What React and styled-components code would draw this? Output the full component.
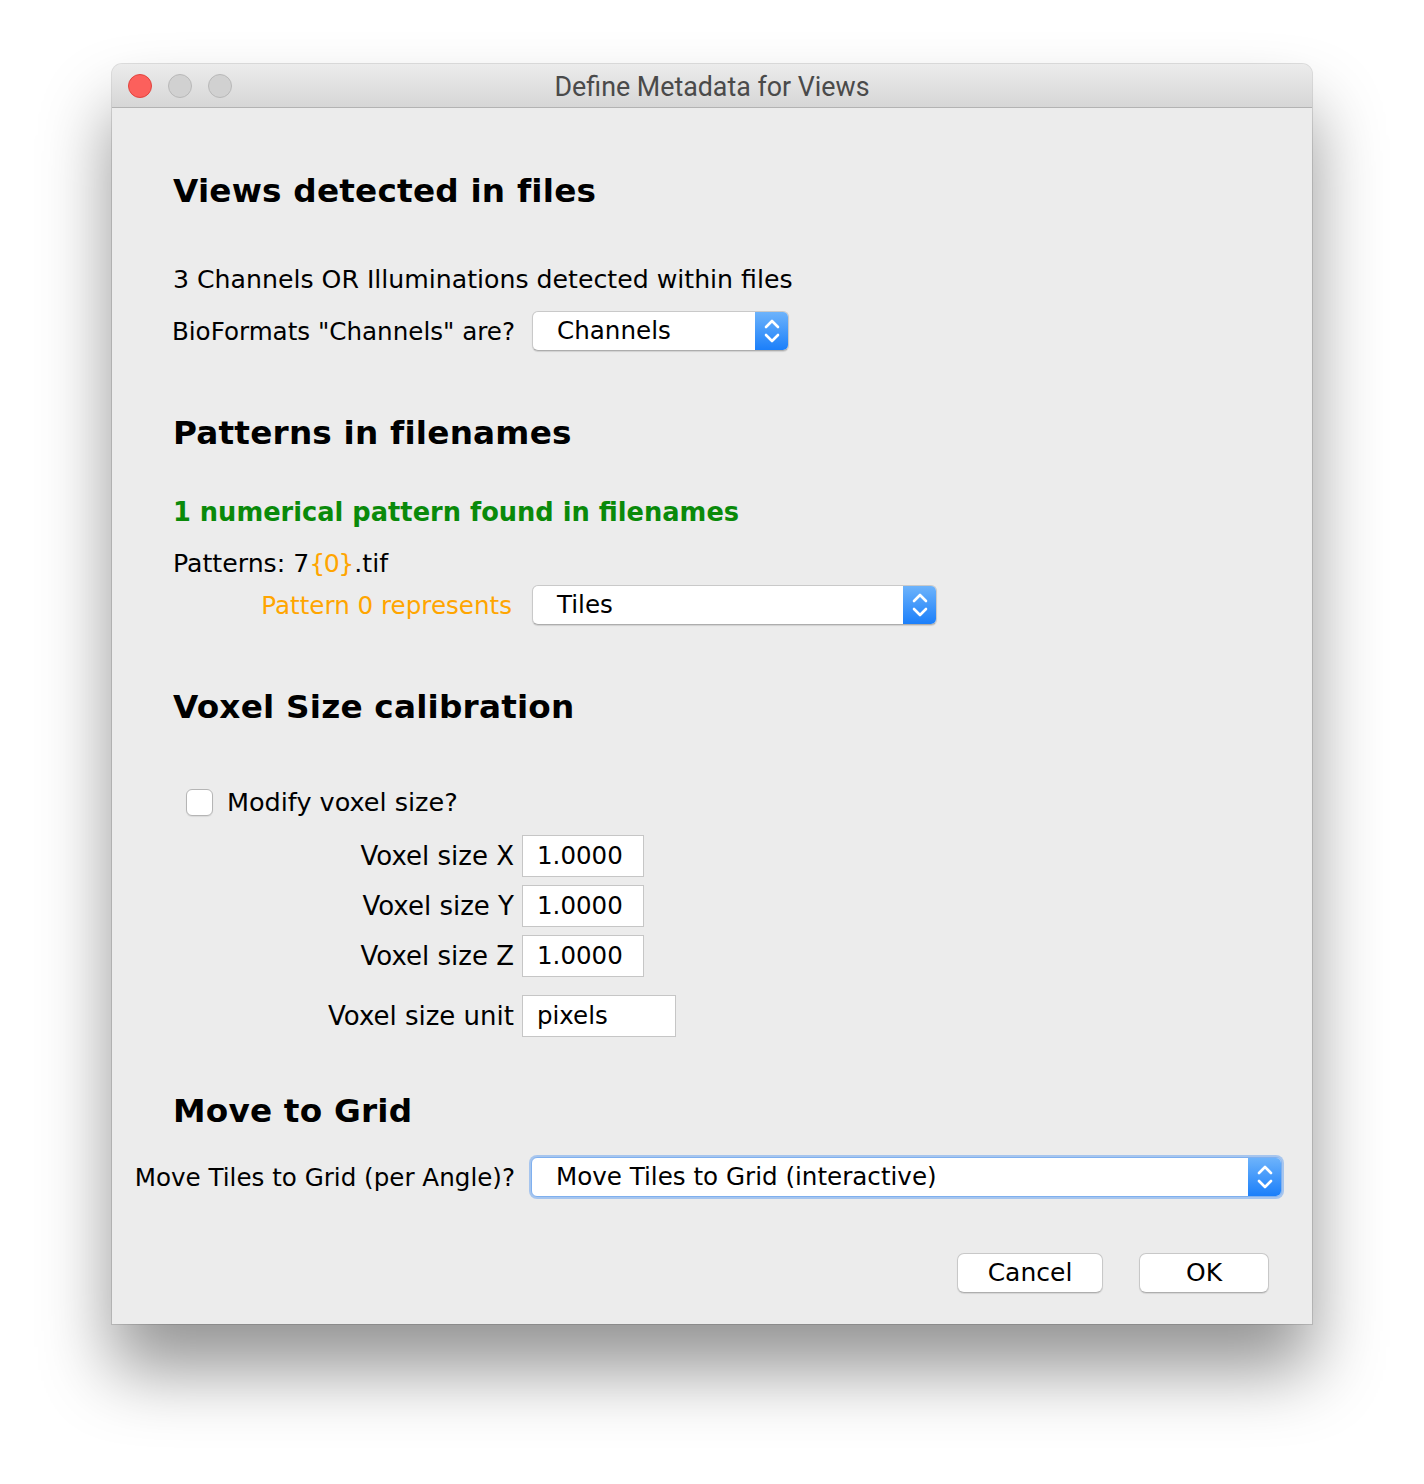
import React from "react";
import styled, { createGlobalStyle } from "styled-components";

const Global = createGlobalStyle`
  html, body { margin: 0; padding: 0; background: #ffffff; }
  body { font-family: "DejaVu Sans", sans-serif; }
  * { box-sizing: border-box; }
`;

const Page = styled.div`
  width: 1424px;
  height: 1484px;
  padding: 64px 0 0 112px;
`;

const Window = styled.div`
  width: 1200px;
  height: 1260px;
  border-radius: 10px 10px 0 0;
  background: #ececec;
  box-shadow: 0 46px 70px rgba(0, 0, 0, 0.42), 0 0 0 1px rgba(0, 0, 0, 0.12);
  display: flex;
  flex-direction: column;
  overflow: hidden;
`;

const TitleBar = styled.div`
  height: 44px;
  flex: none;
  background: linear-gradient(#ececec, #d6d6d6);
  border-bottom: 1px solid #b3b3b3;
  position: relative;
  display: flex;
  align-items: center;
  justify-content: center;
`;

const Lights = styled.div`
  position: absolute;
  left: 16px;
  top: 10px;
  display: flex;
  gap: 16px;
`;

const Light = styled.span`
  width: 24px;
  height: 24px;
  border-radius: 50%;
  background: ${(p) => (p.$red ? "#fc605c" : "#d1d1d1")};
  border: 1px solid ${(p) => (p.$red ? "#e0443e" : "#b8b8b8")};
`;

const Title = styled.div`
  font-family: Roboto, "Liberation Sans", sans-serif;
  font-size: 26.8px;
  color: #4a4a4a;
  padding-top: 2px;
`;

const Body = styled.div`
  flex: 1;
  display: flex;
  flex-direction: column;
  padding-top: 61px;
`;

const Heading = styled.h2`
  margin: ${(p) => p.$mt || 0}px 0 0 61px;
  height: 44px;
  line-height: 44px;
  font-size: 32.7px;
  font-weight: bold;
  color: #000;
  letter-spacing: 0.2px;
`;

const Line = styled.div`
  margin: ${(p) => p.$mt || 0}px 0 0 61px;
  height: 40px;
  line-height: 40px;
  font-size: ${(p) => (p.$bold ? 25.7 : 25.2)}px;
  color: ${(p) => p.$color || "#000"};
  font-weight: ${(p) => (p.$bold ? "bold" : "normal")};
`;

const Orange = styled.span`
  color: #ffa500;
  letter-spacing: -1.5px;
  margin-right: 1.5px;
`;

const Row = styled.div`
  margin-top: ${(p) => p.$mt || 0}px;
  display: flex;
  align-items: center;
  height: ${(p) => p.$h || 40}px;
`;

const Label = styled.div`
  width: ${(p) => p.$w || 403}px;
  flex: none;
  text-align: right;
  font-size: ${(p) => p.$fs || 24.6}px;
  color: ${(p) => p.$color || "#000"};
  white-space: nowrap;
`;

const Select = styled.div`
  margin-left: ${(p) => p.$ml || 17}px;
  width: ${(p) => p.$w}px;
  height: 40px;
  display: flex;
  background: #fff;
  border-radius: 6px;
  border: 1px solid ${(p) => (p.$focus ? "#7fb0ef" : "#c9c9c9")};
  border-bottom-color: ${(p) => (p.$focus ? "#7fb0ef" : "#adadad")};
  box-shadow: ${(p) =>
    p.$focus
      ? "0 0 0 2px rgba(110, 165, 240, 0.55)"
      : "0 1px 1px rgba(0,0,0,0.12)"};
  overflow: hidden;
`;

const SelectText = styled.div`
  flex: 1;
  padding-left: 24px;
  font-size: 24.6px;
  line-height: 38px;
  color: #000;
  white-space: nowrap;
`;

const Stepper = styled.div`
  width: 33px;
  flex: none;
  background: linear-gradient(#6db3fb, #1b7ffa);
  display: flex;
  align-items: center;
  justify-content: center;
`;

const Field = styled.div`
  margin-left: 8px;
  width: ${(p) => p.$w}px;
  height: 42px;
  background: #fff;
  border: 1px solid #c6c6c6;
  padding-left: 14px;
  font-size: 24.5px;
  line-height: 40px;
  color: #000;
`;

const CheckRow = styled.div`
  margin: 53px 0 0 74px;
  height: 40px;
  display: flex;
  align-items: center;
  gap: 14px;
  font-size: 25.5px;
  color: #000;
`;

const Box = styled.span`
  width: 27px;
  height: 27px;
  border-radius: 6px;
  background: #fff;
  border: 1px solid #b5b5b5;
  box-shadow: 0 1px 1px rgba(0,0,0,0.08);
`;

const Buttons = styled.div`
  margin-top: 56px;
  padding-right: 43px;
  display: flex;
  justify-content: flex-end;
  gap: 36px;
`;

const Button = styled.div`
  width: ${(p) => p.$w}px;
  height: 40px;
  background: #fff;
  border: 1px solid #c8c8c8;
  border-bottom-color: #aeaeae;
  border-radius: 7px;
  box-shadow: 0 1px 1px rgba(0,0,0,0.1);
  text-align: center;
  line-height: 38px;
  font-size: 25px;
  color: #000;
`;

const Chevrons = () => (
  <svg width="20" height="28" viewBox="0 0 20 28" fill="none">
    <path d="M4 10 L10 4 L16 10" stroke="#fff" strokeWidth="2.6" strokeLinecap="round" strokeLinejoin="round" />
    <path d="M4 18 L10 24 L16 18" stroke="#fff" strokeWidth="2.6" strokeLinecap="round" strokeLinejoin="round" />
  </svg>
);

const Dropdown = ({ w, value, focus, ml }) => (
  <Select $w={w} $focus={focus} $ml={ml}>
    <SelectText>{value}</SelectText>
    <Stepper>
      <Chevrons />
    </Stepper>
  </Select>
);

export default function App() {
  return (
    <Page>
      <Global />
      <Window>
        <TitleBar>
          <Lights>
            <Light $red />
            <Light />
            <Light />
          </Lights>
          <Title>Define Metadata for Views</Title>
        </TitleBar>
        <Body>
          <Heading>Views detected in files</Heading>
          <Line $mt={47}>3 Channels OR Illuminations detected within files</Line>
          <Row $mt={11}>
            <Label>BioFormats "Channels" are?</Label>
            <Dropdown w={257} value="Channels" />
          </Row>

          <Heading $mt={60}>Patterns in filenames</Heading>
          <Line $mt={37} $bold $color="#0a8a0a">
            1 numerical pattern found in filenames
          </Line>
          <Line $mt={12}>
            Patterns: 7<Orange>{"{0}"}</Orange>.tif
          </Line>
          <Row $mt={1}>
            <Label $w={400} $color="#ffa500">Pattern 0 represents</Label>
            <Dropdown w={405} ml={20} value="Tiles" />
          </Row>

          <Heading $mt={60}>Voxel Size calibration</Heading>
          <CheckRow>
            <Box />
            Modify voxel size?
          </CheckRow>
          <Row $mt={13} $h={42}>
            <Label $w={402} $fs={26}>Voxel size X</Label>
            <Field $w={122}>1.0000</Field>
          </Row>
          <Row $mt={8} $h={42}>
            <Label $w={402} $fs={26}>Voxel size Y</Label>
            <Field $w={122}>1.0000</Field>
          </Row>
          <Row $mt={8} $h={42}>
            <Label $w={402} $fs={26}>Voxel size Z</Label>
            <Field $w={122}>1.0000</Field>
          </Row>
          <Row $mt={18} $h={42}>
            <Label $w={402} $fs={26}>Voxel size unit</Label>
            <Field $w={154}>pixels</Field>
          </Row>

          <Heading $mt={52}>Move to Grid</Heading>
          <Row $mt={24}>
            <Label>Move Tiles to Grid (per Angle)?</Label>
            <Dropdown w={751} ml={16} focus value="Move Tiles to Grid (interactive)" />
          </Row>

          <Buttons>
            <Button $w={146}>Cancel</Button>
            <Button $w={130}>OK</Button>
          </Buttons>
        </Body>
      </Window>
    </Page>
  );
}
